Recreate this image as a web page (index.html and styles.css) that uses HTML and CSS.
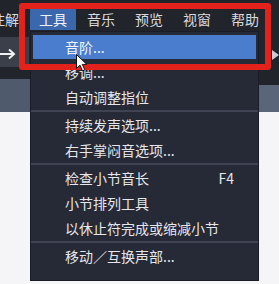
FILE: index.html
```html
<!DOCTYPE html>
<html lang="zh-CN">
<head>
<meta charset="utf-8">
<title>工具菜单</title>
<link rel="stylesheet" href="styles.css">
</head>
<body>
<div class="app">
  <nav class="menubar">
    <span class="menu-title">注解</span>
    <span class="menu-title active">工具</span>
    <span class="menu-title">音乐</span>
    <span class="menu-title">预览</span>
    <span class="menu-title">视窗</span>
    <span class="menu-title">帮助</span>
  </nav>
  <div class="toolrow">
    <div class="tool-btn">
      <svg class="arrow" width="16" height="12" viewBox="0 0 16 12"><path d="M0 6H14M9 1.5L14 6L9 10.5" fill="none" stroke="#f2f2f2" stroke-width="2"/></svg>
    </div>
    <div class="more"></div>
  </div>
  <div class="band">
    <div class="band-left"></div>
    <div class="band-right"></div>
  </div>
  <div class="score"></div>

  <ul class="dropdown">
    <li class="item active">音阶...</li>
    <li class="item">移调...</li>
    <li class="item">自动调整指位</li>
    <li class="sep"></li>
    <li class="item">持续发声选项...</li>
    <li class="item">右手掌闷音选项...</li>
    <li class="sep"></li>
    <li class="item"><span>检查小节音长</span><span class="key">F4</span></li>
    <li class="item">小节排列工具</li>
    <li class="item">以休止符完成或缩减小节</li>
    <li class="sep"></li>
    <li class="item">移动／互换声部...</li>
  </ul>

  <div class="highlight-box"></div>

  <svg class="cursor" width="12" height="18" viewBox="0 0 12 18"><path d="M0.5 0.5V14.5L4 11.2L6.5 16.8L8.8 15.8L6.3 10.4H10.8Z" fill="#ffffff" stroke="#111" stroke-width="1"/></svg>
</div>
</body>
</html>
```
FILE: styles.css
```css
html, body {
  margin: 0;
  padding: 0;
}
body {
  width: 279px;
  height: 284px;
  overflow: hidden;
  background: #f5f5f7;
  font-family: "Noto Sans CJK SC", "Noto Sans", sans-serif;
}
.app {
  position: relative;
  width: 279px;
  height: 284px;
  display: flex;
  flex-direction: column;
  overflow: hidden;
}
.menubar {
  height: 37px;
  box-sizing: border-box;
  padding-top: 9px;
  background: #22242c;
  display: flex;
  align-items: flex-start;
  flex-shrink: 0;
}
.menu-title {
  width: 46px;
  margin: 0 1px;
  flex-shrink: 0;
  height: 21px;
  line-height: 21px;
  text-align: center;
  font-size: 14px;
  color: #d9dadf;
}
.menu-title:first-child {
  margin-left: -18px;
}
.menu-title.active {
  background: #3b67ad;
  color: #eef1f7;
}
.toolrow {
  height: 42px;
  background: #22242c;
  display: flex;
  justify-content: space-between;
  align-items: flex-start;
  flex-shrink: 0;
}
.tool-btn {
  width: 29px;
  height: 30px;
  background: #3b3f49;
  display: flex;
  align-items: center;
}
.arrow {
  display: block;
  margin-top: 4px;
}
.more {
  width: 0;
  height: 0;
  margin-top: 13px;
  margin-right: 0;
  border-top: 5px solid transparent;
  border-bottom: 5px solid transparent;
  border-left: 7px solid #c9cdd6;
}
.band {
  height: 33px;
  display: flex;
  justify-content: space-between;
  background: #22242c;
  flex-shrink: 0;
}
.band-left {
  width: 30px;
  background: #4f5a6d;
}
.band-right {
  width: 20px;
  margin-top: 6px;
  background: #5a6579;
}
.score {
  flex: 1;
  background: #f5f5f7;
}
.dropdown {
  position: absolute;
  left: 30px;
  top: 31px;
  width: 229px;
  height: 250px;
  box-sizing: border-box;
  margin: 0;
  padding: 2px 2px 3px;
  list-style: none;
  background: #262936;
  border: 1px solid #1b1d26;
}
.item {
  height: 24px;
  margin: 1px 0;
  padding: 0 22px 0 32px;
  display: flex;
  justify-content: space-between;
  align-items: center;
  font-size: 14px;
  color: #e6e7eb;
  white-space: nowrap;
}
.item.active {
  background: #4a7dcd;
  color: #f4f6fb;
}
.key {
  color: #e6e7eb;
}
.sep {
  height: 2px;
  margin: 1px -2px 0;
  background: #404351;
}
.highlight-box {
  position: absolute;
  left: 19px;
  top: 3px;
  width: 252px;
  height: 67px;
  box-sizing: border-box;
  border: 6px solid #e3221b;
  border-radius: 3px;
}
.cursor {
  position: absolute;
  left: 76px;
  top: 54px;
}
```
